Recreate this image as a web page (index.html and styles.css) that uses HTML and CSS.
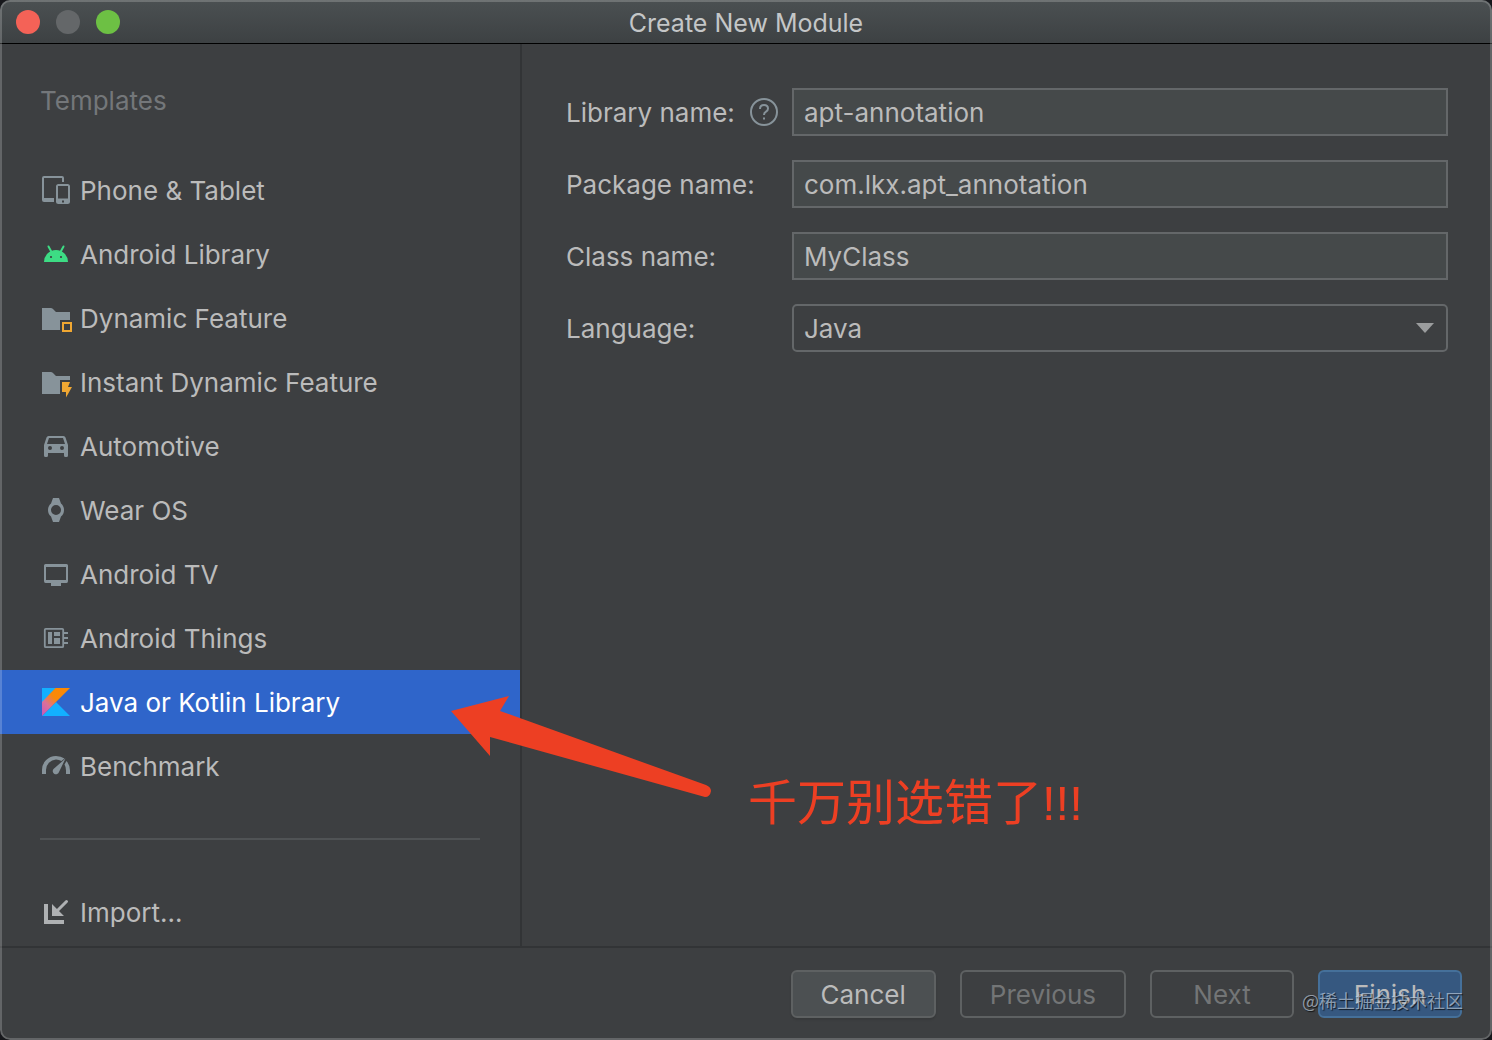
FILE: index.html
```
<!DOCTYPE html>
<html lang="en">
<head>
    <meta charset="UTF-8">
    <meta name="viewport" content="width=device-width, initial-scale=1.0">
    <title>Create New Module</title>
    <link rel="stylesheet" href="styles.css">
</head>
<body>
    <div class="window">
        <header class="titlebar">
            <div class="lights">
                <button type="button" class="light close" aria-label="Close"></button>
                <button type="button" class="light minimize" aria-label="Minimize" disabled></button>
                <button type="button" class="light maximize" aria-label="Maximize"></button>
            </div>
            <h1>Create New Module</h1>
        </header>

        <div class="content">
            <nav class="sidebar">
                <h2>Templates</h2>
                <ul class="templates">
                    <li><a href="#phone">
                        <svg class="icon" viewBox="0 0 32 32">
                            <path d="M23 8V4q0-1-1-1H4q-1 0-1 1v21" fill="none" stroke="currentColor" stroke-width="2"/>
                            <path d="M2 24h12v4H4q-2 0-2-2z"/>
                            <path fill-rule="evenodd" d="M18.500 10h9q2.500 0 2.500 2.500v15q0 2.500-2.500 2.500h-9q-2.500 0-2.500-2.500v-15q0-2.500 2.500-2.500zM18 12v12.500h10V12zM22 26.500v2h2v-2z"/>
                        </svg>
                        Phone &amp; Tablet</a></li>
                    <li><a href="#library">
                        <svg class="icon android" viewBox="0 0 32 32">
                            <path d="M8.500 8.500l3 5.500M23.500 8.500l-3 5.500" fill="none" stroke="currentColor" stroke-width="2" stroke-linecap="round"/>
                            <path fill-rule="evenodd" d="M4 24a12 12 0 0 1 24 0zM9.900 19a1.100 1.100 0 1 0 2.200 0a1.100 1.100 0 1 0-2.200 0zM19.900 19a1.100 1.100 0 1 0 2.200 0a1.100 1.100 0 1 0-2.200 0z"/>
                        </svg>
                        Android Library</a></li>
                    <li><a href="#dynamic">
                        <svg class="icon" viewBox="0 0 32 32">
                            <path d="M2 6h9q1.500 0 2.500 1.500L16 10h14v8H20v10H2z"/>
                            <rect x="23" y="21" width="8" height="8" fill="none" stroke="#f0a732" stroke-width="2"/>
                        </svg>
                        Dynamic Feature</a></li>
                    <li><a href="#instant">
                        <svg class="icon" viewBox="0 0 32 32">
                            <path d="M2 6h9q1.500 0 2.500 1.500L16 10h14v4H20v14H2z"/>
                            <path fill="#f0a732" d="M22 16h8l-2 5h4l-6 10.500V26h-4z"/>
                        </svg>
                        Instant Dynamic Feature</a></li>
                    <li><a href="#automotive">
                        <svg class="icon" viewBox="0 0 32 32">
                            <path fill-rule="evenodd" d="M8.500 6h15q1.500 0 2 1.500L28 15v10.500q0 1.500-1.500 1.500h-1q-1.500 0-1.500-1.500V23H8v2.500Q8 27 6.500 27h-1Q4 27 4 25.500V15l2.500-7.500q.5-1.500 2-1.500zM9 8l-2 6h18l-2-6zM8 18a2 2 0 1 0 4 0a2 2 0 1 0-4 0zM20 18a2 2 0 1 0 4 0a2 2 0 1 0-4 0z"/>
                        </svg>
                        Automotive</a></li>
                    <li><a href="#wear">
                        <svg class="icon" viewBox="0 0 32 32">
                            <path fill-rule="evenodd" d="M13 4h6l2 5.500Q24 12 24 16t-3 6.500L19 28h-6l-2-5.500Q8 20 8 16t3-6.500zM11 16a5 5 0 1 0 10 0a5 5 0 1 0-10 0z"/>
                        </svg>
                        Wear OS</a></li>
                    <li><a href="#tv">
                        <svg class="icon" viewBox="0 0 32 32">
                            <path fill-rule="evenodd" d="M5.500 6h21Q28 6 28 7.500v15.500q0 2-1.500 2H21v3H11v-3H5.500Q4 25 4 23V7.500Q4 6 5.500 6zM6 9v13h20V9z"/>
                        </svg>
                        Android TV</a></li>
                    <li><a href="#things">
                        <svg class="icon" viewBox="0 0 32 32">
                            <rect x="4.800" y="6.800" width="18.400" height="18.400" rx="1" fill="none" stroke="currentColor" stroke-width="1.800"/>
                            <path d="M8 10h4v12H8zM14 10h6v4h-6zM14 16h6v6h-6zM24 10h4v2h-4zM24 15h4v2h-4zM24 20h4v2h-4z"/>
                        </svg>
                        Android Things</a></li>
                    <li><a href="#kotlin" class="selected" aria-current="true">
                        <svg class="icon" viewBox="0 0 32 32">
                            <defs>
                                <linearGradient id="kotlin" x1="0" y1="1" x2="1" y2="0">
                                    <stop offset="0" stop-color="#c757bc"/>
                                    <stop offset=".3" stop-color="#d9719a"/>
                                    <stop offset=".55" stop-color="#f88909"/>
                                    <stop offset="1" stop-color="#ff8900"/>
                                </linearGradient>
                            </defs>
                            <path fill="#12b0ff" d="M2 2h14L2 17zM2 30l14-14 14 14z"/>
                            <path fill="url(#kotlin)" d="M15.500 2H30L2 30V16z"/>
                        </svg>
                        Java or Kotlin Library</a></li>
                    <li><a href="#benchmark">
                        <svg class="icon" viewBox="0 0 32 32">
                            <path d="M2 24v-3.500A14 14 0 0 1 16 6q5 0 8.500 2.500l-3 2.500Q19 9.500 16 9.500A10.500 10.500 0 0 0 6 20v4z"/>
                            <path d="M26.500 11Q30 15 30 20.500V24h-4v-3.500q0-3.500-1.500-6z"/>
                            <path d="M25.500 8.500L19 22a3.200 3.200 0 1 1-5.500-3z"/>
                        </svg>
                        Benchmark</a></li>
                </ul>
                <hr>
                <a href="#import" class="import">
                    <svg class="icon" viewBox="0 0 32 32">
                        <path d="M4 8h4v16h16v4H4zM12 8v12h12z"/>
                        <path d="M26.500 5.500L15 17" fill="none" stroke="currentColor" stroke-width="3" stroke-linecap="round"/>
                    </svg>
                    Import...</a>
            </nav>

            <main>
                <form id="module" class="fields">
                    <div class="field-label">
                        <label for="library-name">Library name:</label>
                        <svg class="help" viewBox="0 0 28 28">
                            <circle cx="14" cy="14" r="13"/>
                            <path d="M10 11q0-4 4-4t4 3.500q0 2-2 3.200t-2 3.300M14 19.500v2"/>
                        </svg>
                    </div>
                    <input type="text" id="library-name" value="apt-annotation">

                    <label for="package-name">Package name:</label>
                    <input type="text" id="package-name" value="com.lkx.apt_annotation">

                    <label for="class-name">Class name:</label>
                    <input type="text" id="class-name" value="MyClass">

                    <label for="language">Language:</label>
                    <div class="select">
                        <select id="language">
                            <option>Java</option>
                            <option>Kotlin</option>
                        </select>
                        <svg class="caret" viewBox="0 0 18 10"><path d="M0 0h18L9 10z"/></svg>
                    </div>
                </form>
            </main>
        </div>

        <footer class="buttons">
            <button type="button" class="cancel">Cancel</button>
            <button type="button" disabled>Previous</button>
            <button type="button" disabled>Next</button>
            <button type="submit" form="module" class="finish">Finish</button>
        </footer>

        <!-- Notes drawn over the dialog -->
        <svg class="arrow" viewBox="0 0 262 104">
            <path d="M1 16L59 1l-9 15 206 74q5 2 5 6-1 6-6 6L40 42v19z"/>
        </svg>
        <p class="note" lang="zh">千万别选错了!!!</p>
        <span class="watermark" lang="zh">@稀土掘金技术社区</span>
    </div>
</body>
</html>
```
FILE: styles.css
```
* {
    box-sizing: border-box;
}

body {
    margin: 0;
    background: #17181c;
    color: #bbbbbb;
    font-family: Inter, "Noto Sans CJK SC", sans-serif;
    font-size: 26px;
    line-height: 32px;
}

/* Window */
.window {
    position: relative;
    display: flex;
    flex-direction: column;
    min-height: 100vh;
    background: #3d3f41;
    border-radius: 10px;
    overflow: hidden;
}

.window::after {
    content: "";
    position: absolute;
    inset: 0;
    border: 2px solid rgba(255, 255, 255, 0.2);
    border-radius: 10px;
    pointer-events: none;
}

.titlebar {
    display: grid;
    grid-template-columns: 1fr auto 1fr;
    align-items: center;
    height: 44px;
    padding: 0 16px;
    background: linear-gradient(#4b5052, #3d4143);
    border-bottom: 1px solid #000;
}

.titlebar h1 {
    margin: 0;
    padding-top: 2px;
    font-size: 25px;
    font-weight: 400;
    color: #c4c6c7;
}

.lights {
    display: flex;
    gap: 16px;
}

.light {
    width: 24px;
    height: 24px;
    padding: 0;
    border: none;
    border-radius: 50%;
}

.close {
    background: #f46257;
}

.minimize {
    background: #646769;
}

.maximize {
    background: #6dc044;
}

/* Sidebar */
.content {
    display: flex;
    flex: 1;
}

.sidebar {
    flex: 0 0 522px;
    padding-top: 41px;
    border-right: 2px solid #323436;
}

.sidebar h2 {
    margin: 0 40px 41px;
    font-size: 26px;
    font-weight: 400;
    color: #74777a;
}

.templates {
    margin: 0;
    padding: 0;
    list-style: none;
}

.sidebar a {
    display: flex;
    gap: 8px;
    height: 64px;
    padding: 16px 40px;
    color: #bbbbbb;
    line-height: 34px;
    text-decoration: none;
}

.sidebar .selected {
    background: #2f65ca;
    color: #fff;
}

.sidebar hr {
    height: 2px;
    margin: 40px;
    border: none;
    background: #505355;
}

.icon {
    width: 32px;
    height: 32px;
    color: #87939a;
    fill: currentColor;
}

.icon.android {
    color: #3ddc84;
}

.import .icon {
    color: #afb1b3;
}

/* Form */
main {
    flex: 1;
    padding: 44px;
}

.fields {
    display: grid;
    grid-template-columns: 226px 1fr;
    row-gap: 24px;
    align-items: center;
}

.fields label {
    padding-top: 2px;
}

.field-label {
    display: flex;
    align-items: center;
    justify-content: space-between;
    padding-right: 14px;
}

.help {
    width: 28px;
    height: 28px;
    fill: none;
    stroke: #87939a;
    stroke-width: 2;
}

input,
select {
    width: 100%;
    height: 48px;
    padding: 0 10px;
    border: 2px solid #646769;
    background: #45494a;
    color: #bbbbbb;
    font: inherit;
}

.select {
    position: relative;
}

select {
    display: block;
    padding-top: 2px;
    border-radius: 5px;
    background: #3d3f41;
    appearance: none;
}

.caret {
    position: absolute;
    top: 19px;
    right: 14px;
    width: 18px;
    height: 10px;
    fill: #9b9d9e;
    pointer-events: none;
}

/* Buttons */
.buttons {
    display: flex;
    justify-content: flex-end;
    gap: 24px;
    padding: 22px 30px;
    border-top: 2px solid #323436;
}

.buttons button {
    min-width: 144px;
    height: 48px;
    padding: 2px 28px 0;
    border: 2px solid #5e6162;
    border-radius: 6px;
    background: none;
    color: #bbbbbb;
    font: inherit;
}

.buttons button:disabled {
    color: #737576;
}

.buttons .cancel {
    background: #4c5052;
    box-shadow: 0 2px 2px rgba(0, 0, 0, 0.1);
}

.buttons .finish {
    border-color: #45709a;
    background: #365880;
}

/* Notes */
.arrow {
    position: absolute;
    top: 695px;
    left: 450px;
    width: 262px;
    fill: #ed3f23;
}

.note {
    position: absolute;
    top: 768px;
    left: 748px;
    margin: 0;
    color: #ed3f23;
    font-family: "Liberation Sans", "Noto Sans CJK SC", sans-serif;
    font-size: 49px;
    line-height: 70px;
}

.watermark {
    position: absolute;
    right: 29px;
    bottom: 24px;
    color: rgba(200, 215, 230, 0.65);
    font-family: "Noto Sans CJK SC", sans-serif;
    font-size: 18px;
    line-height: 32px;
    text-shadow: 1px 1px 1px rgba(0, 0, 0, 0.7);
    pointer-events: none;
}
```
